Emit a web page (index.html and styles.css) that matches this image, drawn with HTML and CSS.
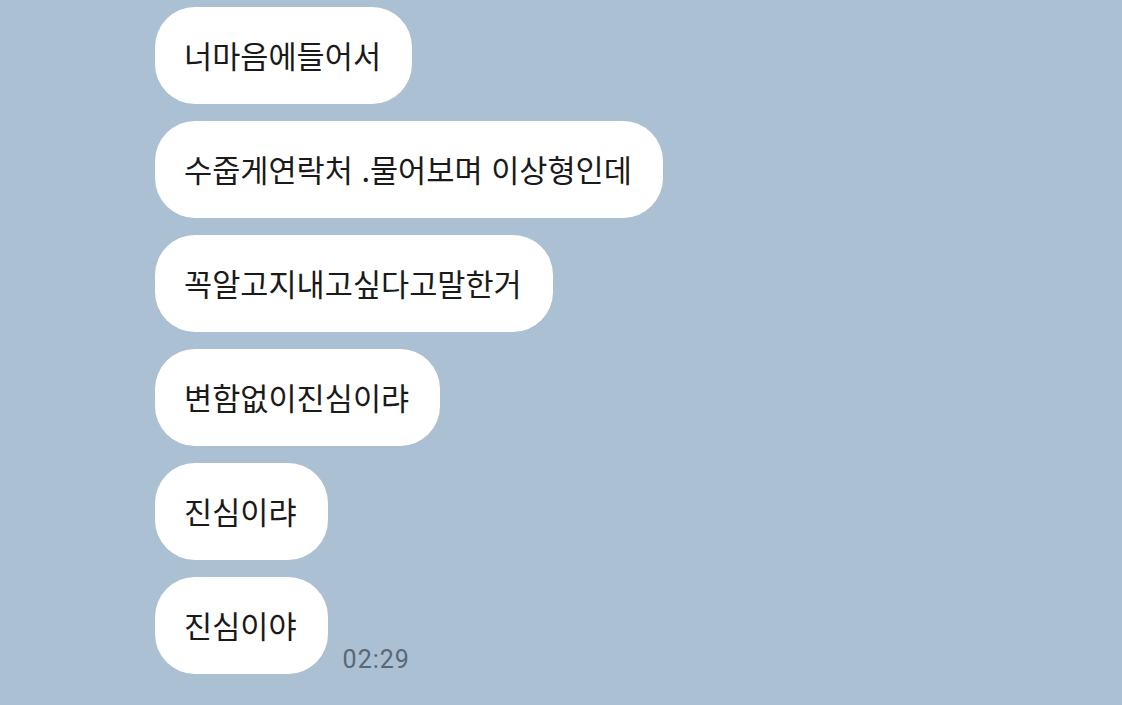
FILE: index.html
```html
<!DOCTYPE html>
<html lang="ko">
<head>
    <meta charset="UTF-8">
    <meta name="viewport" content="width=device-width, initial-scale=1.0">
    <title>채팅</title>
    <link rel="stylesheet" href="styles.css">
</head>
<body>

    <div class="chat">
        <div class="row">
            <div class="bubble">너마음에들어서</div>
        </div>
        <div class="row">
            <div class="bubble">수줍게연락처 .물어보며 이상형인데</div>
        </div>
        <div class="row">
            <div class="bubble">꼭알고지내고싶다고말한거</div>
        </div>
        <div class="row">
            <div class="bubble">변함없이진심이랴</div>
        </div>
        <div class="row">
            <div class="bubble">진심이랴</div>
        </div>
        <div class="row">
            <div class="bubble">진심이야</div>
            <span class="time">02:29</span>
        </div>
    </div>

</body>
</html>
```

FILE: styles.css
```css
body {
    margin: 0;
    background-color: #abc0d3;
    font-family: "Noto Sans CJK KR", "Noto Sans", sans-serif;
    height: 705px;
    overflow: hidden;
}
.chat {
    display: flex;
    flex-direction: column;
    gap: 17px;
    padding: 7px 0 0 155px;
}
.row {
    display: flex;
    align-items: flex-end;
}
.bubble {
    background: #fff;
    color: #1a1a1a;
    font-size: 30.6px;
    line-height: 41px;
    padding: 28px 31px 28px 29px;
    border-radius: 40px;
    white-space: nowrap;
}
.time {
    font-family: Roboto, "Noto Sans", sans-serif;
    font-size: 25px;
    line-height: 1;
    letter-spacing: 1px;
    color: #5a6775;
    margin: 0 0 2px 15px;
}
```
